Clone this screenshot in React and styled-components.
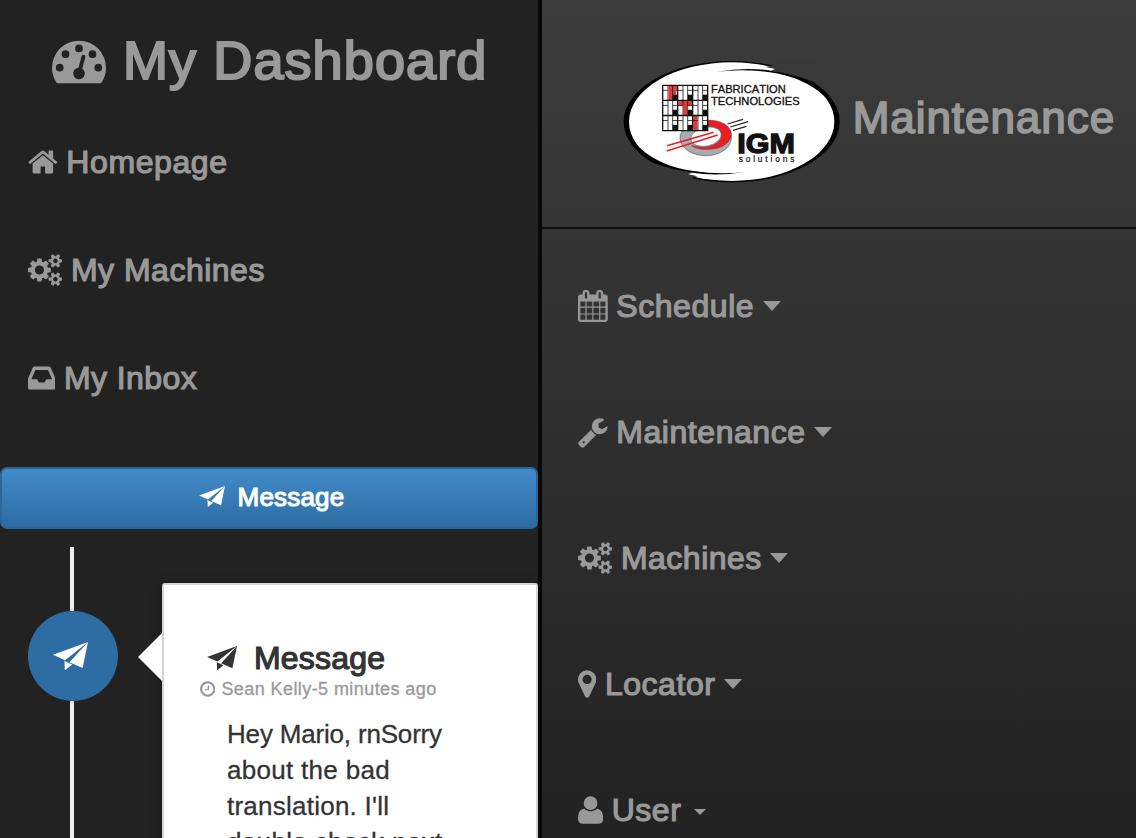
import React from "react";
import styled, { createGlobalStyle } from "styled-components";

const GlobalStyle = createGlobalStyle`
  * { box-sizing: border-box; }
  html, body { margin: 0; padding: 0; background: #222; overflow: hidden; }
  body {
    font-family: "Liberation Sans", Arial, sans-serif;
    font-kerning: none;
    color: #333;
  }
`;

const Page = styled.div`
  display: flex;
  width: 100%;
  height: 838px;
  overflow: hidden;
`;

const Sidebar = styled.aside`
  flex: 0 0 542px;
  border-right: 4px solid #080808;
  background: #222;
  overflow: hidden;
`;

const Label = styled.span`
  font-size: ${(p) => p.$size || 32}px;
  letter-spacing: ${(p) => p.$spacing ?? 0.5}px;
  -webkit-text-stroke: ${(p) => p.$stroke ?? 1.2}px currentColor;
  white-space: pre;
`;

const Glyph = styled.svg`
  flex: none;
  display: block;
  width: ${(p) => p.$w}px;
  height: ${(p) => p.$h}px;
  fill: currentColor;
`;

const DashboardTitle = styled.h1`
  display: flex;
  align-items: center;
  gap: 17px;
  height: 108px;
  margin: 0;
  padding: 12px 0 0 52px;
  font-weight: 400;
  line-height: 96px;
  color: #999;
`;

const NavLink = styled.div`
  display: flex;
  align-items: center;
  gap: 8.6px;
  height: ${(p) => p.$height}px;
  padding-left: ${(p) => p.$inset}px;
  line-height: ${(p) => p.$height}px;
  color: #999;
`;

const MessageButton = styled.button`
  display: flex;
  align-items: center;
  justify-content: center;
  gap: 13px;
  width: 538px;
  height: 62px;
  margin: 35px 0 18px;
  padding: 0 0 2px 5px;
  border: 2px solid #2b669a;
  border-radius: 7px;
  background: linear-gradient(#428bca, #2d6ca2);
  color: #fff;
  font-family: inherit;
`;

const Timeline = styled.div`
  display: flex;
  align-items: flex-start;
  height: 320px;
`;

const Rail = styled.div`
  display: flex;
  flex-direction: column;
  align-items: center;
  width: 90px;
  height: 100%;
  margin-left: 28px;
`;

const RailLine = styled.div`
  width: 4px;
  height: ${(p) => (p.$height ? p.$height + "px" : "auto")};
  flex: ${(p) => (p.$height ? "none" : 1)};
  margin-right: 2px;
  background: #eee;
`;

const Badge = styled.div`
  display: flex;
  flex: none;
  align-items: center;
  justify-content: center;
  width: 90px;
  height: 90px;
  padding-right: 5px;
  border-radius: 50%;
  background: #2e6da4;
  color: #fff;
`;

const Arrow = styled.div`
  position: relative;
  z-index: 1;
  width: 0;
  height: 0;
  margin: 86px 0 0 20px;
  border: 24px solid transparent;
  border-left-width: 0;
  border-right-color: #fff;
`;

const Card = styled.article`
  flex: none;
  width: 376px;
  height: 320px;
  margin-top: 36px;
  padding: 54px 36px 0;
  border: 2px solid #d4d4d4;
  border-radius: 3px;
  background: #fff;
  box-shadow: 0 2px 12px rgba(0, 0, 0, 0.35);
`;

const CardTitle = styled.h4`
  display: flex;
  align-items: center;
  gap: 17px;
  height: 38px;
  margin: 0 0 2px;
  padding-left: 7px;
  font-weight: 400;
  line-height: 38px;
`;

const Meta = styled.div`
  display: flex;
  align-items: center;
  gap: 6px;
  height: 20px;
  line-height: 20px;
  color: #999;
`;

const MessageBody = styled.p`
  display: flex;
  flex-direction: column;
  margin: 17px 0 0 27px;
  line-height: 36px;
`;

const Main = styled.main`
  flex: 1;
  overflow: hidden;
  background: linear-gradient(#3c3c3c 0, #222 838px);
`;

const Brand = styled.header`
  display: flex;
  align-items: center;
  gap: 13px;
  height: 229px;
  padding: 16px 0 0 81px;
  margin-bottom: 14px;
  border-bottom: 2px solid #101010;
  color: #999;
`;

const BrandName = styled(Label)`
  line-height: 60px;
  padding-bottom: 8px;
`;

const Caret = styled.span`
  width: 0;
  height: 0;
  margin: ${(p) => (p.$small ? "4px 0 0 4px" : "0")};
  border-top: ${(p) => (p.$small ? 6 : 10)}px solid currentColor;
  border-left: ${(p) => (p.$small ? 6 : 9)}px solid transparent;
  border-right: ${(p) => (p.$small ? 6 : 9)}px solid transparent;
`;

/* Icon outlines on a 1792-unit em: [left edge, advance width, path]. */
const ICONS = {
  gauge: [0, 1792, "M1792 1152q0 261-141 483-19 29-54 29h-1402q-35 0-54-29-141-221-141-483 0-182 71-348t191-286 286-191 348-71 348 71 286 191 191 286 71 348zM384 1152a128 128 0 1 0-256 0 128 128 0 1 0 256 0zM576 704a128 128 0 1 0-256 0 128 128 0 1 0 256 0zM1004 1185l101-382q6-26-7.500-48.500t-38.500-29.500-48 6.500-30 39.500l-101 382q-60 5-107 43.500t-63 98.500q-20 77 20 146t117 89 146-20 89-117q16-60-6-117t-72-91zM1664 1152a128 128 0 1 0-256 0 128 128 0 1 0 256 0zM1024 512a128 128 0 1 0-256 0 128 128 0 1 0 256 0zM1472 704a128 128 0 1 0-256 0 128 128 0 1 0 256 0z"],
  home: [64, 1664, "M1472 992v480q0 26-19 45t-45 19h-384v-384h-256v384h-384q-26 0-45-19t-19-45v-480q0-1 .5-3t.5-3l575-474 575 474q1 2 1 6zm223-69l-62 74q-8 9-21 11h-3q-13 0-21-7l-692-577-692 577q-12 8-24 7-13-2-21-11l-62-74q-8-10-7-23.500t11-21.500l719-599q32-26 76-26t76 26l244 204v-195q0-14 9-23t23-9h192q14 0 23 9t9 23v408l219 182q10 8 11 21.500t-7 23.500z"],
  cogs: [-64, 1920, "M832 896q0-106-75-181t-181-75-181 75-75 181 75 181 181 75 181-75 75-181zm768 512q0-52-38-90t-90-38-90 38-38 90q0 53 37.500 90.500t90.500 37.500 90.500-37.500 37.500-90.500zm0-1024q0-52-38-90t-90-38-90 38-38 90q0 53 37.500 90.500t90.500 37.500 90.500-37.500 37.500-90.500zm-384 421v185q0 10-7 19.500t-16 10.500l-155 24q-11 35-32 76 34 48 90 115 7 11 7 20 0 12-7 19-23 30-82.500 89.500t-78.500 59.500q-11 0-21-7l-115-90q-37 19-77 31-11 108-23 155-7 24-30 24h-186q-11 0-20-7.500t-10-17.500l-23-153q-34-10-75-31l-118 89q-7 7-20 7-11 0-21-8-144-133-144-160 0-9 7-19 10-14 41-53t47-61q-23-44-35-82l-152-24q-10-1-17-9.500t-7-19.500v-185q0-10 7-19.500t16-10.500l155-24q11-35 32-76-34-48-90-115-7-11-7-20 0-12 7-20 22-30 82-89t79-59q11 0 21 7l115 90q34-18 77-32 11-108 23-154 7-24 30-24h186q11 0 20 7.500t10 17.500l23 153q34 10 75 31l118-89q8-7 20-7 11 0 21 8 144 133 144 160 0 8-7 19-12 16-42 54t-45 60q23 48 34 82l152 23q10 2 17 10.500t7 19.500zm640 533v140q0 16-149 31-12 27-30 52 51 113 51 138 0 4-4 7-122 71-124 71-8 0-46-47t-52-68q-20 2-30 2t-30-2q-14 21-52 68t-46 47q-2 0-124-71-4-3-4-7 0-25 51-138-18-25-30-52-149-15-149-31v-140q0-16 149-31 13-29 30-52-51-113-51-138 0-4 4-7 4-2 35-20t59-34 30-16q8 0 46 46.500t52 67.500q20-2 30-2t30 2q51-71 92-112l6-2q4 0 124 70 4 3 4 7 0 25-51 138 17 23 30 52 149 15 149 31zm0-1024v140q0 16-149 31-12 27-30 52 51 113 51 138 0 4-4 7-122 71-124 71-8 0-46-47t-52-68q-20 2-30 2t-30-2q-14 21-52 68t-46 47q-2 0-124-71-4-3-4-7 0-25 51-138-18-25-30-52-149-15-149-31v-140q0-16 149-31 13-29 30-52-51-113-51-138 0-4 4-7 4-2 35-20t59-34 30-16q8 0 46 46.500t52 67.500q20-2 30-2t30 2q51-71 92-112l6-2q4 0 124 70 4 3 4 7 0 25-51 138 17 23 30 52 149 15 149 31z"],
  inbox: [128, 1536, "M1151 960h316q-1-3-2.500-8t-2.500-8l-212-496h-708l-212 496q-1 2-2.500 8t-2.500 8h316l95 192h320zm513 30v482q0 26-19 45t-45 19h-1408q-26 0-45-19t-19-45v-482q0-62 25-123l238-552q10-25 36.500-42t52.500-17h832q26 0 52.500 17t36.500 42l238 552q25 61 25 123z"],
  calendar: [64, 1664, "M192 1664h288v-288h-288v288zm352 0h320v-288h-320v288zm-352-352h288v-320h-288v320zm352 0h320v-320h-320v320zm-352-384h288v-288h-288v288zm736 736h320v-288h-320v288zm-384-736h320v-288h-320v288zm768 736h288v-288h-288v288zm-384-352h320v-320h-320v320zm-352-864v-288q0-13-9.500-22.500t-22.500-9.500h-64q-13 0-22.500 9.500t-9.500 22.500v288q0 13 9.500 22.500t22.500 9.500h64q13 0 22.500-9.500t9.500-22.500zm736 864h288v-320h-288v320zm-384-384h320v-288h-320v288zm384 0h288v-288h-288v288zm32-480v-288q0-13-9.500-22.500t-22.500-9.500h-64q-13 0-22.500 9.500t-9.500 22.500v288q0 13 9.500 22.500t22.500 9.500h64q13 0 22.500-9.500t9.500-22.500zm384-64v1280q0 52-38 90t-90 38h-1408q-52 0-90-38t-38-90v-1280q0-52 38-90t90-38h128v-96q0-66 47-113t113-47h64q66 0 113 47t47 113v96h384v-96q0-66 47-113t113-47h64q66 0 113 47t47 113v96h128q52 0 90 38t38 90z"],
  wrench: [64, 1664, "M448 1472q0-26-19-45t-45-19-45 19-19 45 19 45 45 19 45-19 19-45zm644-420l-682 682q-37 37-90 37-52 0-91-37l-106-108q-38-36-38-90 0-53 38-91l681-681q39 98 114.500 173.500t173.500 114.500zm634-435q0 39-23 106-47 134-164.500 217.500t-258.500 83.500q-185 0-316.500-131.500t-131.500-316.500 131.500-316.500 316.500-131.500q58 0 121.500 16.500t107.500 46.500q16 11 16 28t-16 28l-293 169v224l193 107q5-3 79-48.500t135.500-81 70.500-35.500q15 0 23.500 10t8.500 25z"],
  marker: [384, 1024, "M1152 640q0-106-75-181t-181-75-181 75-75 181 75 181 181 75 181-75 75-181zm256 0q0 109-33 179l-364 774q-16 33-47.500 52t-67.500 19-67.500-19-46.500-52l-365-774q-33-70-33-179 0-212 150-362t362-150 362 150 150 362z"],
  user: [192, 1408, "M1600 1405q0 120-73 189.500t-194 69.500h-874q-121 0-194-69.500t-73-189.500q0-53 3.500-103.500t14-109 26.500-108.500 43-97.500 62-81 85.500-53.500 111.500-20q9 0 42 21.500t74.500 48 108 48 133.500 21.500 133.500-21.500 108-48 74.500-48 42-21.500q61 0 111.500 20t85.500 53.500 62 81 43 97.500 26.500 108.500 14 109 3.500 103.500zm-320-893q0 159-112.500 271.500t-271.500 112.500-271.500-112.500-112.500-271.500 112.500-271.500 271.500-112.500 271.500 112.500 112.500 271.500z"],
  clock: [128, 1536, "M1024 544v448q0 14-9 23t-23 9h-320q-14 0-23-9t-9-23v-64q0-14 9-23t23-9h224v-352q0-14 9-23t23-9h64q14 0 23 9t9 23zm416 352q0-148-73-273t-198-198-273-73-273 73-198 198-73 273 73 273 198 198 273 73 273-73 198-198 73-273zm224 0q0 209-103 385.500t-279.500 279.500-385.500 103-385.500-103-279.500-279.500-103-385.500 103-385.500 279.500-279.500 385.500-103 385.500 103 279.500 279.500 103 385.500z"],
};

function Icon({ name, size = 32 }) {
  const [left, advance, path] = ICONS[name];
  return (
    <Glyph
      $w={(advance / 1792) * size}
      $h={size}
      viewBox={`${left} 0 ${advance} 1792`}
      fillRule="evenodd"
    >
      <path d={path} />
    </Glyph>
  );
}

function Plane({ width }) {
  return (
    <Glyph $w={width} $h={width * 0.81} viewBox="0 0 104 84">
      <path d="M0 38L104 0L36 54Z M104 0L88 77L49 60Z M34 56L57 67L35 84Z" />
    </Glyph>
  );
}

/* Brush-stroke break in the oval's rim; drawn once and turned half round for the other end. */
function RimBreak({ transform, backdrop }) {
  return (
    <g transform={transform}>
      <path d="M495 44L468 51L496 57L484 62L545 75L602 93L650 96L600 28L495 28Z" fill={backdrop} />
      <path d="M322 65Q410 50 484 62Q550 72 602 92L650 130L646 140Q580 80 480 67Q400 55 322 65Z" fill="#000" />
    </g>
  );
}

const TILES = [0, 1, 2].flatMap((row) => [0, 1, 2].map((col) => [col, row]));

function Logo() {
  return (
    <Glyph $w={216.67} $h={123.33} viewBox="40 30 650 370">
      <ellipse cx="366" cy="215" rx="324" ry="182" fill="#000" />
      <ellipse cx="366" cy="215" rx="308" ry="178" fill="#fff" />
      <RimBreak backdrop="#393939" />
      <RimBreak backdrop="#373737" transform="rotate(180 366 215)" />

      <ellipse cx="288" cy="264" rx="77" ry="53" fill="#a9abad" stroke="#555" strokeWidth="2" />
      <path d="M285 211C340 207 369 232 365 258C357 289 319 302 275 298C260 296 250 291 245 286C292 299 331 283 335 260C338 238 319 227 285 229Z" fill="#ed1c24" stroke="#555" strokeWidth="1.500" />
      <ellipse cx="289" cy="260" rx="46" ry="28" fill="#fff" stroke="#555" strokeWidth="1.500" transform="rotate(-12 289 260)" />
      <path d="M172 287L312 247M171 303L324 255" stroke="#ed1c24" strokeWidth="4.500" />
      <path d="M354 222L400 208M362 231L415 215M370 241L410 229" stroke="#222" strokeWidth="3.500" />

      <rect x="159" y="106" width="135" height="136" fill="#fff" />
      <g fill="#e8363b">
        <path d="M177 107h13v43h-13zM190 107h13v12h-13zM190 122h10v12h-10zM206 153h42v14h-42zM221 167h12v28h-12zM251 198h12v43h-12z" />
      </g>
      {TILES.map(([col, row]) => {
        const x = 159 + col * 45;
        const y = 106 + row * 45.300;
        return (
          <g key={`${col}-${row}`}>
            <rect x={x + 30} y={y + 28} width="15" height="17" fill="#111" />
            <path
              d={`M${x + 16} ${y}v45M${x + 30} ${y}v45M${x} ${y + 15}h16M${x + 30} ${y + 15}h15`}
              fill="none"
              stroke="#222"
              strokeWidth="2.500"
            />
          </g>
        );
      })}
      <path d="M159 106h135v136h-135zM159 151.300h135M159 196.600h135M204 106v136M249 106v136" fill="none" stroke="#111" strokeWidth="4" />

      <g fill="#111" stroke="#111" fontFamily="Liberation Sans, Arial, sans-serif">
        <text x="304" y="129" fontSize="31" strokeWidth="0.900" textLength="224" lengthAdjust="spacingAndGlyphs">FABRICATION</text>
        <text x="304" y="165" fontSize="31" strokeWidth="0.900" textLength="266" lengthAdjust="spacingAndGlyphs">TECHNOLOGIES</text>
        <text x="383" y="308" fontSize="84" fontWeight="700" strokeWidth="4" textLength="173" lengthAdjust="spacingAndGlyphs">IGM</text>
        <text x="387" y="337" fontSize="25" strokeWidth="0.600" textLength="167">solutions</text>
      </g>
    </Glyph>
  );
}

const SIDE_LINKS = [
  { icon: "home", text: "Homepage", spacing: 0.6 },
  { icon: "cogs", text: "My Machines", spacing: 0.5 },
  { icon: "inbox", text: "My Inbox", spacing: 0.4 },
];

const MAIN_LINKS = [
  { icon: "calendar", text: "Schedule", spacing: 0.55 },
  { icon: "wrench", text: "Maintenance", spacing: 0.55 },
  { icon: "cogs", text: "Machines", spacing: 0.5 },
  { icon: "marker", text: "Locator", spacing: 0.55 },
  { icon: "user", text: "User", small: true },
];

const BODY_LINES = [
  { text: "Hey Mario, rnSorry", spacing: -0.18 },
  { text: "about the bad", spacing: 0.3 },
  { text: "translation. I'll", spacing: 0.24 },
  { text: "double check next", spacing: 0.35 },
];

export default function App() {
  return (
    <>
      <GlobalStyle />
      <Page>
        <Sidebar>
          <DashboardTitle>
            <Icon name="gauge" size={54} />
            <Label $size={54} $spacing={1.1} $stroke={2.2}>My Dashboard</Label>
          </DashboardTitle>
          {SIDE_LINKS.map((link) => (
            <NavLink key={link.text} $height={108} $inset={28}>
              <Icon name={link.icon} />
              <Label $spacing={link.spacing}>{link.text}</Label>
            </NavLink>
          ))}
          <MessageButton>
            <Plane width={26} />
            <Label $size={26} $spacing={0.2} $stroke={1.1}>Message</Label>
          </MessageButton>
          <Timeline>
            <Rail>
              <RailLine $height={64} />
              <Badge><Plane width={35} /></Badge>
              <RailLine />
            </Rail>
            <Arrow />
            <Card>
              <CardTitle>
                <Plane width={30} />
                <Label $spacing={0.2}>Message</Label>
              </CardTitle>
              <Meta>
                <Icon name="clock" size={18} />
                <Label $size={18} $spacing={0.42} $stroke={0.3}>Sean Kelly-5 minutes ago</Label>
              </Meta>
              <MessageBody>
                {BODY_LINES.map((line) => (
                  <Label key={line.text} $size={26} $spacing={line.spacing} $stroke={0.3}>{line.text}</Label>
                ))}
              </MessageBody>
            </Card>
          </Timeline>
        </Sidebar>
        <Main>
          <Brand>
            <Logo />
            <BrandName $size={44} $spacing={0.95} $stroke={1.7}>Maintenance</BrandName>
          </Brand>
          {MAIN_LINKS.map((link) => (
            <NavLink key={link.text} $height={126} $inset={36}>
              <Icon name={link.icon} />
              <Label $spacing={link.spacing}>{link.text}</Label>
              <Caret $small={link.small} />
            </NavLink>
          ))}
        </Main>
      </Page>
    </>
  );
}
